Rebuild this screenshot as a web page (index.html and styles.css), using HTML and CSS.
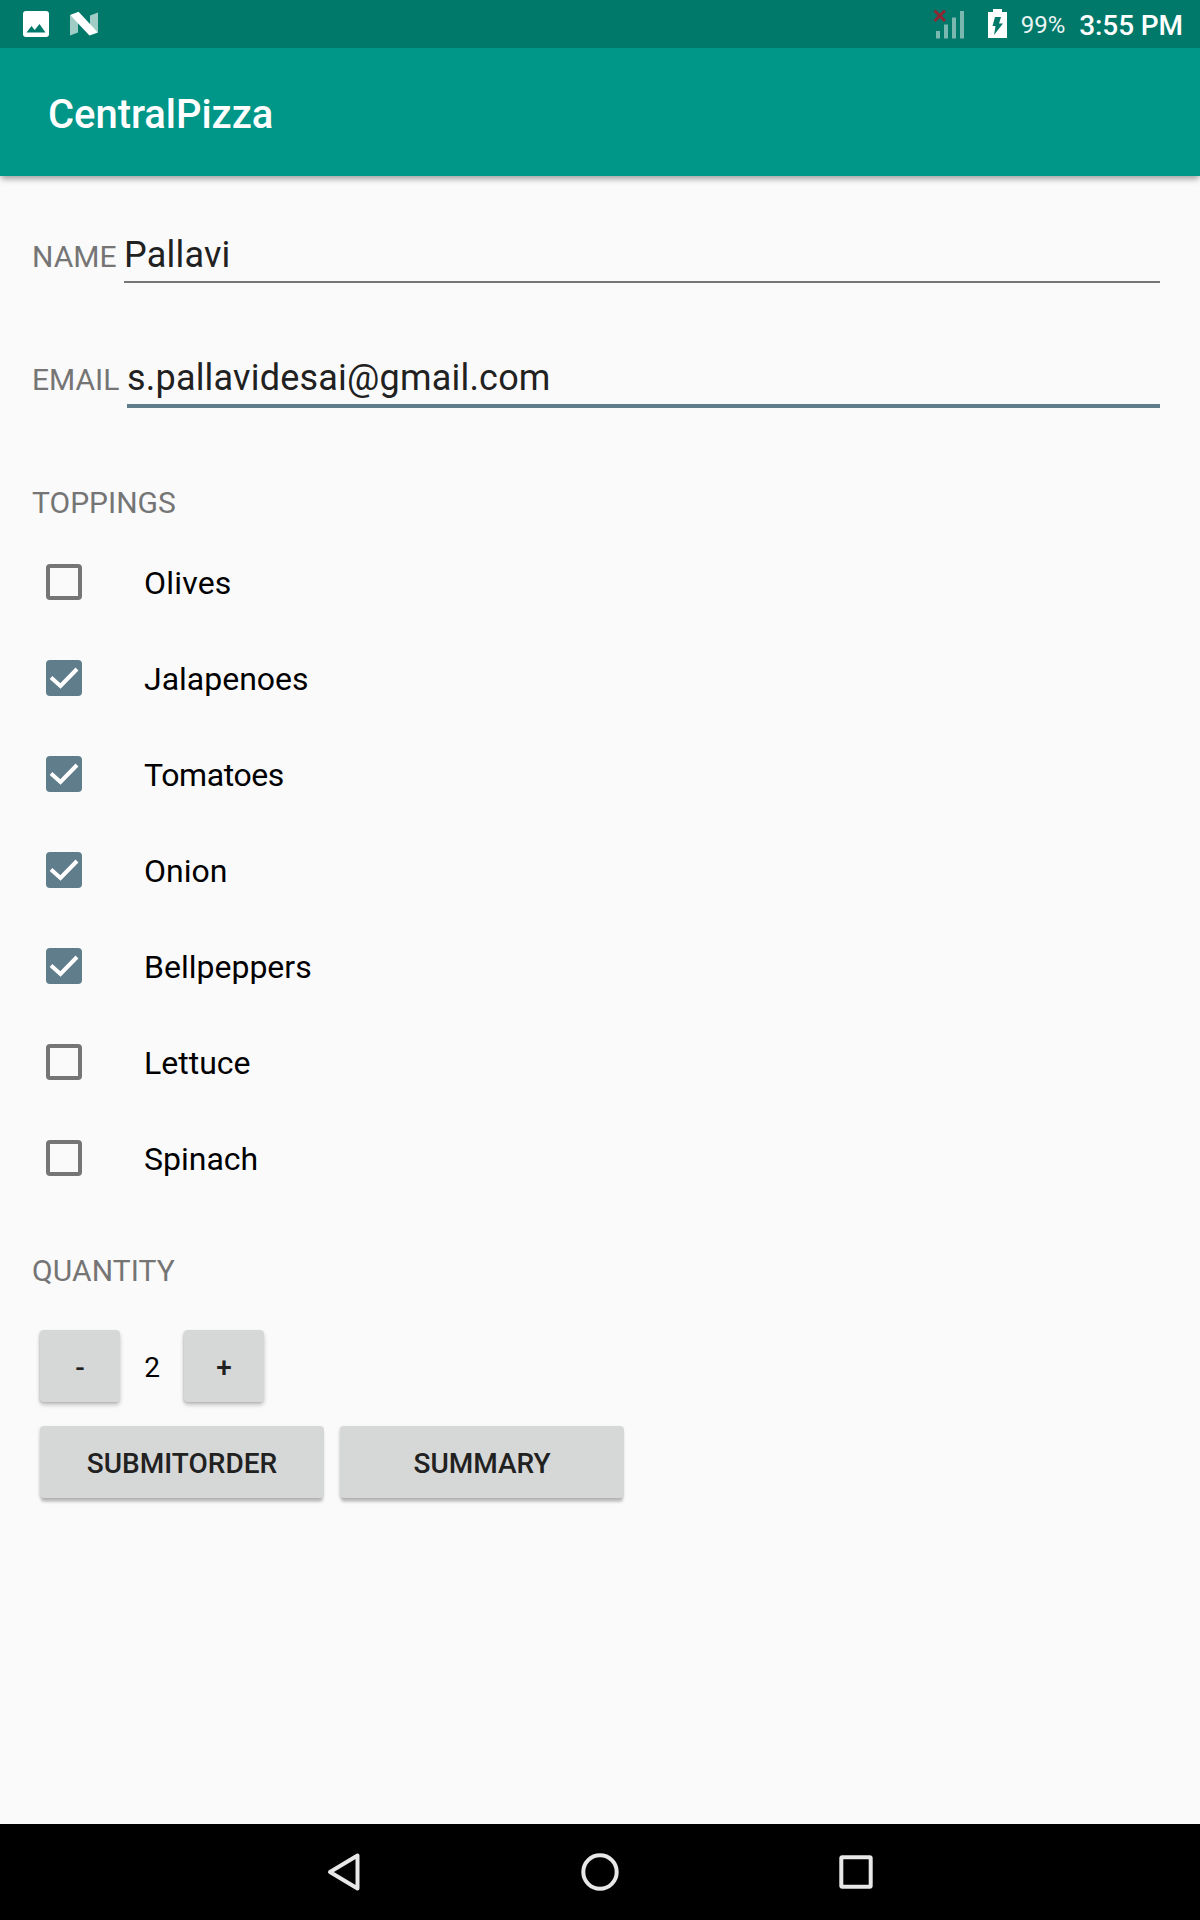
FILE: index.html
```html
<!DOCTYPE html>
<html lang="en">
<head>
<meta charset="utf-8">
<title>CentralPizza</title>
<link rel="stylesheet" href="styles.css">
</head>
<body>
<div class="screen">
  <div class="status-bar">
    <svg class="status-left" width="80" height="30" viewBox="0 0 80 30">
      <path fill="#fff" fill-rule="evenodd" d="M3 2h20a3 3 0 0 1 3 3v20a3 3 0 0 1-3 3h-20a3 3 0 0 1-3-3v-20a3 3 0 0 1 3-3zM3.500 23.500h19l-6-8.500-4.800 6-3.200-4z"/>
      <path fill="#9fcdc6" d="M47 6l8 7.500v10l-8 3zM75 3.500v20l-8-7v-10z"/>
      <path fill="#fff" d="M47 6l8.500-3.200L75 23.500l-8.500 3z"/>
    </svg>
    <svg class="signal" width="32" height="32" viewBox="0 0 32 32">
      <path fill="#79b8af" d="M3 23h4v7.500h-4zM11 16.500h4v14h-4zM19 9.500h4v21h-4zM27 3h4v27.500h-4z"/>
      <path d="M1.500 2.500l10.500 10.500M12 2.500l-10.500 10.500" stroke="#8d2732" stroke-width="3"/>
    </svg>
    <svg class="battery" width="19" height="29" viewBox="0 0 19 29">
      <path fill="#fff" d="M5 0h9v3h5v26H0V3h5z"/>
      <path fill="#00796b" d="M7 8h6l-2 6.500h4L6 26l1.500-9H4.500z"/>
    </svg>
    <span class="percent">99%</span>
    <span class="clock">3:55 PM</span>
  </div>
  <header class="app-bar"><span class="title">CentralPizza</span></header>
  <main class="form">
    <div class="field"><span class="label">NAME</span><span class="value">Pallavi</span></div>
    <div class="field"><span class="label email">EMAIL</span><span class="value focused">s.pallavidesai@gmail.com</span></div>
    <div class="label heading">TOPPINGS</div>
    <div class="toppings">
      <div class="option"><span class="box"></span><span class="name loose">Olives</span></div>
      <div class="option"><span class="box checked"><svg width="36" height="36"><path d="M5 17.500l9.500 8.500L31 9"/></svg></span><span class="name">Jalapenoes</span></div>
      <div class="option"><span class="box checked"><svg width="36" height="36"><path d="M5 17.500l9.500 8.500L31 9"/></svg></span><span class="name tight">Tomatoes</span></div>
      <div class="option"><span class="box checked"><svg width="36" height="36"><path d="M5 17.500l9.500 8.500L31 9"/></svg></span><span class="name">Onion</span></div>
      <div class="option"><span class="box checked"><svg width="36" height="36"><path d="M5 17.500l9.500 8.500L31 9"/></svg></span><span class="name">Bellpeppers</span></div>
      <div class="option"><span class="box"></span><span class="name">Lettuce</span></div>
      <div class="option"><span class="box"></span><span class="name">Spinach</span></div>
    </div>
    <div class="label heading quantity">QUANTITY</div>
    <div class="stepper">
      <button class="btn small">-</button>
      <span class="count">2</span>
      <button class="btn small">+</button>
    </div>
    <div class="actions">
      <button class="btn wide">SUBMITORDER</button>
      <button class="btn wide">SUMMARY</button>
    </div>
  </main>
  <nav class="nav-bar">
    <svg width="40" height="40" viewBox="0 0 40 40"><path d="M6 20L33.500 3.500v33z"/></svg>
    <svg width="40" height="40" viewBox="0 0 40 40"><circle cx="20" cy="20" r="16.700"/></svg>
    <svg width="40" height="40" viewBox="0 0 40 40"><rect x="5.300" y="5.300" width="29.400" height="29.400" rx="1"/></svg>
  </nav>
</div>
</body>
</html>
```
FILE: styles.css
```css
* { box-sizing: border-box; }
body {
  margin: 0;
  font-family: Roboto, "Liberation Sans", sans-serif;
  background: #fafafa;
}
svg { display: block; flex: none; }
.screen {
  display: flex;
  flex-direction: column;
  width: 1200px;
  height: 1920px;
}
.status-bar {
  flex: none;
  display: flex;
  align-items: flex-start;
  height: 48px;
  padding: 9px 17px 0 23px;
  background: #00796b;
  color: #fff;
  line-height: 32px;
}
.signal { margin: -1px 0 0 auto; }
.battery { margin-left: 23px; }
.percent { margin-left: 14px; font-size: 24px; opacity: .92; }
.clock { margin-left: 14px; padding-top: 1px; font-size: 28px; font-weight: 500; letter-spacing: -.1px; }
.app-bar {
  flex: none;
  display: flex;
  align-items: center;
  height: 128px;
  padding: 5px 48px 0;
  background: #009688;
  box-shadow: 0 4px 6px -1px rgba(0, 0, 0, .36);
  color: #fff;
}
.title { font-size: 40px; font-weight: 500; line-height: 48px; letter-spacing: -.05px; }
.form { flex: 1; padding: 59px 40px 0 32px; }
.field {
  display: flex;
  align-items: baseline;
  height: 123px;
}
.label { color: #757575; font-size: 30px; line-height: 40px; }
.field .label { flex: none; width: 92px; }
.field .label.email { width: 95px; }
.value {
  flex: 1;
  padding-bottom: 6px;
  border-bottom: 2px solid #757575;
  color: #212121;
  font-size: 36px;
  line-height: 40px;
  letter-spacing: .2px;
}
.value.focused { border-bottom: 4px solid #607d8b; }
.heading { padding-top: 2px; height: 53px; }
.option {
  display: flex;
  align-items: center;
  gap: 62px;
  height: 96px;
  padding-left: 14px;
}
.box {
  width: 36px;
  height: 36px;
  border: 4px solid #757575;
  border-radius: 4px;
}
.box.checked { border: 0; background: #607d8b; }
.box path { fill: none; stroke: #fff; stroke-width: 4; }
.name { padding-top: 2px; font-size: 32px; line-height: 40px; color: #000; }
.name.loose { letter-spacing: .2px; }
.name.tight { letter-spacing: -.4px; }
.quantity { height: 124px; padding-top: 45px; letter-spacing: .1px; }
.stepper, .actions { display: flex; align-items: center; padding-left: 8px; }
.count { width: 64px; padding-top: 3px; text-align: center; font-size: 28px; line-height: 40px; color: #000; }
.actions { gap: 16px; margin-top: 24px; }
.btn {
  height: 72px;
  padding: 3px 0 0;
  border: 0;
  border-radius: 4px;
  background: #d6d7d7;
  box-shadow: 0 3px 4px rgba(0, 0, 0, .22), -1px 1px 2px rgba(0, 0, 0, .1);
  color: #212121;
  font: 500 28px/40px Roboto, "Liberation Sans", sans-serif;
}
.small { width: 80px; }
.wide {
  width: 284px;
  box-shadow: 0 5px 3px -1px rgba(0, 0, 0, .22), -1px 1px 3px rgba(0, 0, 0, .12);
}
.nav-bar {
  flex: none;
  display: flex;
  justify-content: center;
  align-items: center;
  gap: 216px;
  height: 96px;
  background: #000;
}
.nav-bar path, .nav-bar circle, .nav-bar rect {
  fill: none;
  stroke: #e8e8e8;
  stroke-width: 4;
  stroke-linejoin: round;
}
```
